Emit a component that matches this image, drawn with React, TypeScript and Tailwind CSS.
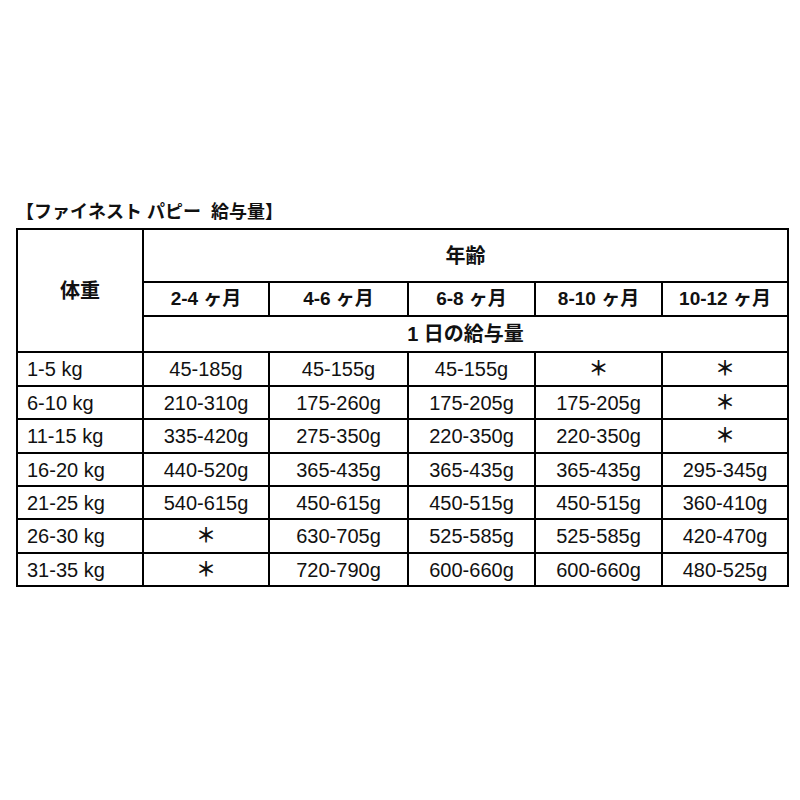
import React from 'react';

const rows: string[][] = [
  ['1-5 kg', '45-185g', '45-155g', '45-155g', '＊', '＊'],
  ['6-10 kg', '210-310g', '175-260g', '175-205g', '175-205g', '＊'],
  ['11-15 kg', '335-420g', '275-350g', '220-350g', '220-350g', '＊'],
  ['16-20 kg', '440-520g', '365-435g', '365-435g', '365-435g', '295-345g'],
  ['21-25 kg', '540-615g', '450-615g', '450-515g', '450-515g', '360-410g'],
  ['26-30 kg', '＊', '630-705g', '525-585g', '525-585g', '420-470g'],
  ['31-35 kg', '＊', '720-790g', '600-660g', '600-660g', '480-525g'],
];

const rowHeights = ['h-[34px]', 'h-[33px]', 'h-[34px]', 'h-[33px]', 'h-[33px]', 'h-[34px]', 'h-[33px]'];

const ages = ['2-4 ヶ月', '4-6 ヶ月', '6-8 ヶ月', '8-10 ヶ月', '10-12 ヶ月'];

const cell = 'border-2 border-black p-0';

const App: React.FC = () => {
  return (
    <div className="min-h-[800px] w-[800px] bg-white pt-[201px] pl-[16px] font-['Liberation_Sans','Noto_Sans_CJK_JP',sans-serif] text-[#111]">
      <h1 className="mb-[4px] h-[23px] text-[18px] leading-[23px] font-bold">
        【ファイネスト パピー&nbsp;&nbsp;給与量】
      </h1>

      <table className="w-[771px] table-fixed border-collapse">
        <colgroup>
          <col className="w-[126px]" />
          <col className="w-[126px]" />
          <col className="w-[139px]" />
          <col className="w-[127px]" />
          <col className="w-[127px]" />
          <col className="w-[126px]" />
        </colgroup>
        <thead>
          <tr className="h-[53px]">
            <th rowSpan={3} className={`${cell} text-[20px] font-bold`}>体重</th>
            <th colSpan={5} className={`${cell} text-[20px] font-bold`}>年齢</th>
          </tr>
          <tr className="h-[34px]">
            {ages.map((a) => (
              <th key={a} className={`${cell} text-[19px] font-bold`}>{a}</th>
            ))}
          </tr>
          <tr className="h-[36px]">
            <th colSpan={5} className={`${cell} text-[20px] font-bold`}>1 日の給与量</th>
          </tr>
        </thead>
        <tbody>
          {rows.map((r, i) => (
            <tr key={r[0]} className={rowHeights[i]}>
              {r.map((v, j) => (
                <td
                  key={j}
                  className={`${cell} text-[20px] leading-none ${j === 0 ? 'pl-[9px] text-left' : 'text-center'} ${v === '＊' ? 'font-bold' : ''}`}
                >
                  {v}
                </td>
              ))}
            </tr>
          ))}
        </tbody>
      </table>
    </div>
  );
};

export default App;
